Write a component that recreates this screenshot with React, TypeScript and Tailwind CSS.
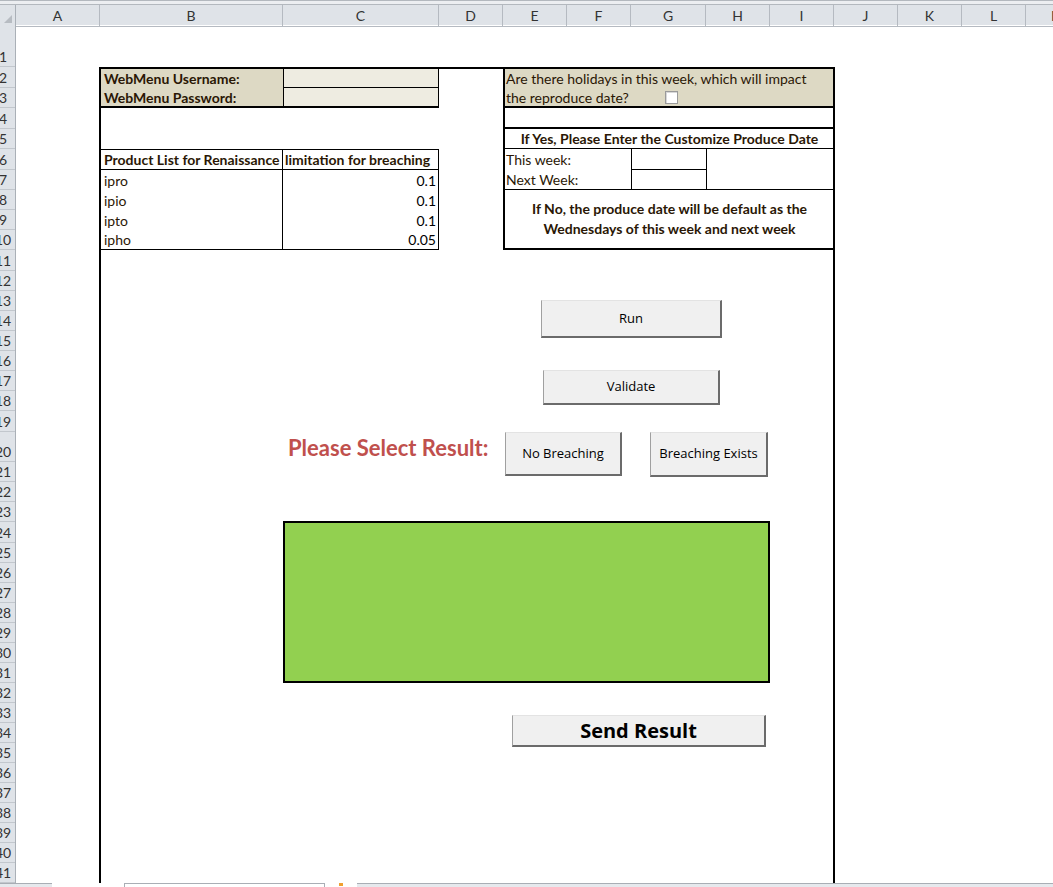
import clsx from 'clsx';
import { ReactNode } from 'react';

const COLS = ['A', 'B', 'C', 'D', 'E', 'F', 'G', 'H', 'I', 'J', 'K', 'L', 'M'];
const ROWS = Array.from({ length: 41 }, (_, i) => i + 1);

// row heights copied from the sheet (row 20 is taller)
const ROW_TRACKS =
  'grid-rows-[42px_21px_20px_21px_20px_21px_20px_20px_20px_20px_21px_20px_20px_20px_20px_20px_20px_20px_21px_30px_20px_20px_20px_21px_20px_20px_20px_20px_20px_20px_20px_20px_20px_20px_20px_20px_20px_20px_20px_20px_20px]';

const products = [
  { row: 'row-start-7', name: 'ipro', limit: '0.1' },
  { row: 'row-start-8', name: 'ipio', limit: '0.1' },
  { row: 'row-start-9', name: 'ipto', limit: '0.1' },
  { row: 'row-start-10', name: 'ipho', limit: '0.05', last: true },
];

const SheetButton = ({
  className,
  children,
}: {
  className: string;
  children: ReactNode;
}) => (
  <button
    className={clsx(
      "flex items-center justify-center self-start justify-self-start bg-[#f0f0f0] border-t border-l border-r-2 border-b-2 border-t-[#e3e3e3] border-l-[#a0a0a0] border-r-[#6b6b6b] border-b-[#6b6b6b] font-['Open_Sans',sans-serif] text-black",
      className
    )}
  >
    {children}
  </button>
);

const App = () => {
  return (
    <div className="w-[1053px] h-[887px] overflow-hidden bg-white flex flex-col font-[Lato,sans-serif] text-[14px] text-[#2a1705]">
      {/* window strip */}
      <div className="h-[5px] shrink-0 bg-[#eceef1] border-t border-b border-[#b3b8be]" />

      {/* column headers */}
      <div className="grid grid-cols-[16px_84px_183px_156px_64px_64px_64px_75px_64px_64px_64px_64px_64px_64px] h-[20px] shrink-0 bg-[#dfe3e8] text-[#333]">
        <div className="flex items-end justify-end border-r border-b border-[#aab0b7] pr-[3px] pb-[3px]">
          <svg width="8" height="8" viewBox="0 0 8 8">
            <polygon points="8,0 8,8 0,8" fill="#b7bcc2" />
          </svg>
        </div>
        {COLS.map((c) => (
          <div
            key={c}
            className="flex items-center justify-center border-r border-b border-[#b5bac1]"
          >
            {c}
          </div>
        ))}
      </div>

      <div className="flex flex-1 min-h-0">
        {/* row headers */}
        <div className={clsx('grid w-[16px] shrink-0 bg-[#dfe3e8] text-[#333] border-r border-[#aab0b7]', ROW_TRACKS)}>
          {ROWS.map((r) => (
            <div key={r} className="flex items-end overflow-hidden border-b border-[#c2c7cd]">
              <span className="shrink-0 w-[26px] -ml-[10px] text-center leading-[18px]">{r}</span>
            </div>
          ))}
        </div>

        {/* sheet */}
        <div
          className={clsx(
            'grid grid-cols-[84px_183px_156px_64px_64px_64px_75px_64px_64px_64px_64px_64px_64px]',
            ROW_TRACKS
          )}
        >
          {/* login block */}
          <div className="col-start-2 row-start-2 flex items-center bg-[#ddd9c4] font-bold pl-[4px] pt-[2px]">
            WebMenu Username:
          </div>
          <div className="col-start-2 row-start-3 flex items-center bg-[#ddd9c4] font-bold pl-[4px] border-b-2 border-black">
            WebMenu Password:
          </div>
          <div className="col-start-3 row-start-2 bg-[#eeece1] border-l border-r border-b border-black" />
          <div className="col-start-3 row-start-3 bg-[#eeece1] border-l border-r border-b-2 border-black" />

          {/* product list */}
          <div className="col-start-2 row-start-6 flex items-center border border-black font-bold pl-[3px] whitespace-nowrap">
            Product List for Renaissance
          </div>
          <div className="col-start-3 row-start-6 flex items-center border-y border-r border-black font-bold pl-[2px] whitespace-nowrap">
            limitation for breaching
          </div>
          {products.map((p) => (
            <div key={p.name} className="contents">
              <div
                className={clsx(
                  'col-start-2 flex items-center border-x border-black pl-[3px]',
                  p.row,
                  p.last && 'border-b'
                )}
              >
                {p.name}
              </div>
              <div
                className={clsx(
                  'col-start-3 flex items-center justify-end border-r border-black pr-[2px] text-black',
                  p.row,
                  p.last && 'border-b'
                )}
              >
                {p.limit}
              </div>
            </div>
          ))}

          {/* holidays block */}
          <div className="col-start-5 col-end-10 row-start-2 row-end-4 flex flex-col bg-[#ddd9c4] border-l-2 border-b-2 border-black pl-[1px]">
            <div className="h-[21px] flex items-center pt-[2px]">
              Are there holidays in this week, which will impact
            </div>
            <div className="h-[18px] flex items-center">
              the reproduce date?
              <span className="ml-[36px] w-[13px] h-[13px] bg-white border border-[#9a9a9a] shadow-[inset_1px_1px_0_#d8d8d8]" />
            </div>
          </div>
          <div className="col-start-5 col-end-10 row-start-4 border-l-2 border-b-2 border-black" />
          <div className="col-start-5 col-end-10 row-start-5 flex items-center justify-center border-l-2 border-b border-black font-bold">
            If Yes, Please Enter the Customize Produce Date
          </div>
          <div className="col-start-5 col-end-7 row-start-6 flex items-center border-l-2 border-black pl-[1px]">
            This week:
          </div>
          <div className="col-start-5 col-end-7 row-start-7 flex items-center border-l-2 border-b border-black pl-[1px]">
            Next Week:
          </div>
          <div className="col-start-7 row-start-6 border-l border-b border-black" />
          <div className="col-start-7 row-start-7 border-l border-b border-black" />
          <div className="col-start-8 col-end-10 row-start-6 row-end-8 border-l border-b border-black" />
          <div className="col-start-5 col-end-10 row-start-8 row-end-11 flex flex-col items-center justify-center border-l-2 border-b-2 border-black font-bold leading-[20px]">
            <span>If No, the produce date will be default as the</span>
            <span>Wednesdays of this week and next week</span>
          </div>

          {/* sheet controls */}
          <SheetButton className="col-start-5 col-end-9 row-start-13 row-end-16 ml-[38px] mt-[9px] w-[181px] h-[38px] text-[13px]">
            Run
          </SheetButton>
          <SheetButton className="col-start-5 col-end-9 row-start-16 row-end-19 ml-[40px] mt-[19px] w-[177px] h-[35px] text-[13px]">
            Validate
          </SheetButton>

          <div className="col-start-3 col-end-5 row-start-20 flex items-center pl-[5px] whitespace-nowrap font-bold text-[22px] text-[#c0504d]">
            Please Select Result:
          </div>
          <SheetButton className="col-start-5 col-end-8 row-start-20 row-end-23 ml-[2px] w-[117px] h-[44px] text-[13px]">
            No Breaching
          </SheetButton>
          <SheetButton className="col-start-7 col-end-10 row-start-20 row-end-23 ml-[19px] w-[118px] h-[45px] text-[13px]">
            Breaching Exists
          </SheetButton>

          <div className="col-start-3 col-end-9 row-start-24 row-end-32 -mt-px bg-[#92d050] border-2 border-black" />

          <SheetButton className="col-start-5 col-end-10 row-start-33 row-end-36 ml-[9px] mt-[12px] w-[254px] h-[32px] text-[20px] font-bold">
            Send Result
          </SheetButton>

          {/* outer frame */}
          <div className="col-start-2 col-end-10 row-start-2 row-end-42 -ml-px -mr-px border-l-2 border-r-2 border-t-2 border-black pointer-events-none" />
        </div>
      </div>

      {/* sheet tabs */}
      <div className="h-[4px] shrink-0 flex">
        <div className="w-[52px] bg-[#e6e9ed] border-t border-[#a9aeb5]" />
        <div className="w-[72px] bg-white" />
        <div className="w-[201px] bg-white border-t border-x border-[#a9aeb5]" />
        <div className="w-[32px] bg-white flex justify-center">
          <div className="w-[4px] h-[3px] bg-[#f0a030]" />
        </div>
        <div className="flex-1 bg-[#e6e9ed] border-t border-[#a9aeb5]" />
      </div>
    </div>
  );
};

export default App;
